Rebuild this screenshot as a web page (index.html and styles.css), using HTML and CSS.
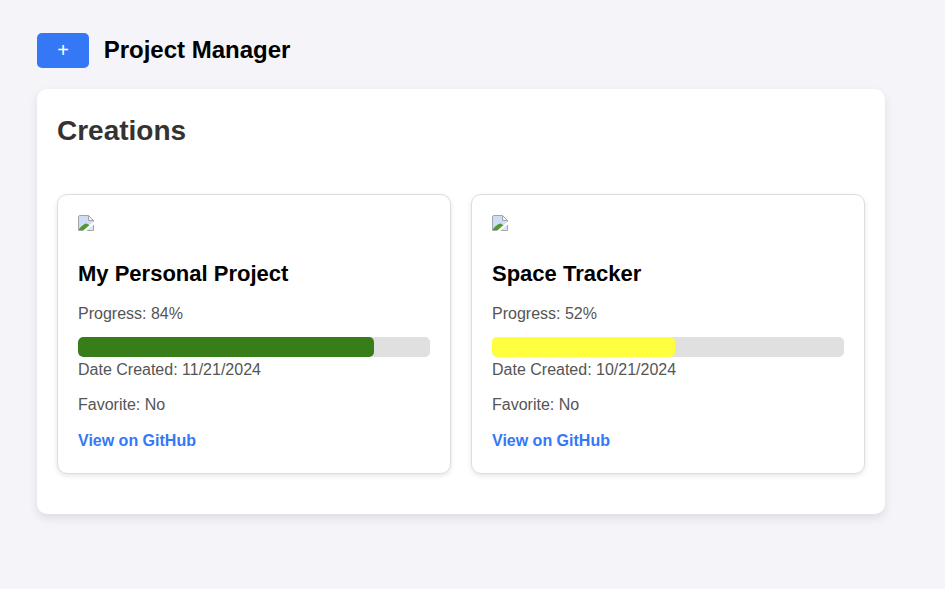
FILE: index.html
```html
<!DOCTYPE html>
<html lang="en">
<head>
    <meta charset="UTF-8" />
    <meta name="viewport" content="width=device-width, initial-scale=1" />
    <title>Project Manager</title>
    <link rel="stylesheet" href="styles.css">
</head>
<body>
    <header class="top-bar">
        <button class="add-btn" type="button">+</button>
        <h1>Project Manager</h1>
    </header>

    <main class="panel">
        <h2>Creations</h2>
        <div class="project-grid">
            <article class="project-card">
                <svg class="broken-img" width="16" height="16" viewBox="0 0 16 16" aria-hidden="true">
                    <path d="M.5 2Q.5 .5 2 .5H10.5L15.5 5.5V15.5H.5Z" fill="#cfdcf6" stroke="#a6a6a6"/>
                    <path d="M10.5 .5V5.5H15.5Z" fill="#f4f4f4" stroke="#a6a6a6"/>
                    <path d="M1 15V14Q5 9 8.5 8.5L12 10.5L7 15Z" fill="#4f9a2c"/>
                    <path d="M6 16.5L16.5 7.5" stroke="#fff" stroke-width="2.4"/>
                    <path d="M11.5 15L15 12V15Z" fill="#e6e6e6"/>
                </svg>
                <h3>My Personal Project</h3>
                <p>Progress: 84%</p>
                <div class="progress-track">
                    <div class="progress-fill fill-green" style="width: 84%"></div>
                </div>
                <p class="date">Date Created: 11/21/2024</p>
                <p>Favorite: No</p>
                <a href="#">View on GitHub</a>
            </article>

            <article class="project-card">
                <svg class="broken-img" width="16" height="16" viewBox="0 0 16 16" aria-hidden="true">
                    <path d="M.5 2Q.5 .5 2 .5H10.5L15.5 5.5V15.5H.5Z" fill="#cfdcf6" stroke="#a6a6a6"/>
                    <path d="M10.5 .5V5.5H15.5Z" fill="#f4f4f4" stroke="#a6a6a6"/>
                    <path d="M1 15V14Q5 9 8.5 8.5L12 10.5L7 15Z" fill="#4f9a2c"/>
                    <path d="M6 16.5L16.5 7.5" stroke="#fff" stroke-width="2.4"/>
                    <path d="M11.5 15L15 12V15Z" fill="#e6e6e6"/>
                </svg>
                <h3>Space Tracker</h3>
                <p>Progress: 52%</p>
                <div class="progress-track">
                    <div class="progress-fill fill-yellow" style="width: 52%"></div>
                </div>
                <p class="date">Date Created: 10/21/2024</p>
                <p>Favorite: No</p>
                <a href="#">View on GitHub</a>
            </article>
        </div>
    </main>
</body>
</html>
```

FILE: styles.css
```css
body {
    font-family: "Liberation Sans", Arial, sans-serif;
    background-color: #f4f4f9;
    color: #000;
    margin: 0;
    padding: 33px 60px 0 37px;
    min-height: 100vh;
    box-sizing: border-box;
}
.top-bar {
    display: flex;
    align-items: center;
    gap: 14.7px;
    margin-bottom: 21px;
}
.top-bar h1 {
    font-size: 24px;
    margin: 0;
    padding-bottom: 2px;
}
.add-btn {
    width: 52px;
    height: 35px;
    background-color: #3478f6;
    color: #fff;
    border: none;
    border-radius: 5px;
    font-family: inherit;
    font-size: 20px;
    padding: 0;
    cursor: pointer;
}
.panel {
    background-color: #fff;
    border-radius: 10px;
    padding: 20px;
    box-shadow: 0 4px 10px rgba(0, 0, 0, 0.1);
}
.panel h2 {
    font-size: 28px;
    line-height: 43px;
    color: #333;
    margin: 0 0 42px;
}
.project-grid {
    display: grid;
    grid-template-columns: 1fr 1fr;
    gap: 20px;
    padding-bottom: 20px;
}
.project-card {
    background-color: #fff;
    border: 1px solid #ddd;
    border-radius: 10px;
    padding: 20px 20px 23px;
    box-shadow: 0 2px 5px rgba(0, 0, 0, 0.1);
}
.broken-img {
    display: block;
}
.project-card h3 {
    font-size: 22px;
    line-height: 25px;
    margin: 30px 0 19px;
}
.project-card p {
    font-size: 16px;
    line-height: 18px;
    color: #555;
    margin: 0 0 17px;
}
.project-card p:first-of-type {
    margin-bottom: 14px;
}
.project-card .date {
    margin-top: 4px;
}
.progress-track {
    height: 20px;
    background-color: #e0e0e0;
    border-radius: 5px;
    overflow: hidden;
}
.progress-fill {
    height: 100%;
    border-radius: 5px;
}
.fill-green {
    background-color: #377e1b;
}
.fill-yellow {
    background-color: #ffff40;
}
.project-card a {
    display: block;
    margin-top: 18px;
    font-size: 16px;
    line-height: 18px;
    font-weight: 700;
    color: #3478f6;
    text-decoration: none;
}
```
